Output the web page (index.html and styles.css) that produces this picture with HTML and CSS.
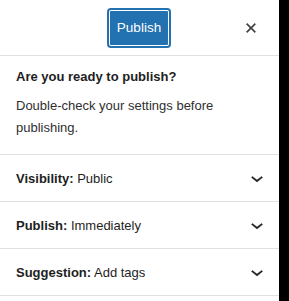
FILE: index.html
```html
<!DOCTYPE html>
<html lang="en">
<head>
  <meta charset="UTF-8">
  <title>Publish panel</title>
  <link rel="stylesheet" href="styles.css">
</head>
<body>
  <div class="panel">
    <div class="panel-header">
      <button class="publish-btn">Publish</button>
      <button class="close-btn" aria-label="Close panel">
        <svg viewBox="0 0 24 24" width="24" height="24"><path d="M12 13.06l3.712 3.713 1.061-1.06L13.061 12l3.712-3.712-1.06-1.06L12 10.938 8.288 7.227l-1.061 1.06L10.939 12l-3.712 3.712 1.06 1.061L12 13.061z"/></svg>
      </button>
    </div>

    <div class="prepublish">
      <p class="ready">Are you ready to publish?</p>
      <p class="hint">Double-check your settings before publishing.</p>
    </div>

    <div class="row">
      <span><strong>Visibility:</strong> Public</span>
      <svg viewBox="0 0 24 24" width="24" height="24"><path d="M17.5 11.6L12 16l-5.5-4.4.9-1.2L12 14l4.6-3.6 1 1.2z"/></svg>
    </div>
    <div class="row">
      <span><strong>Publish:</strong> Immediately</span>
      <svg viewBox="0 0 24 24" width="24" height="24"><path d="M17.5 11.6L12 16l-5.5-4.4.9-1.2L12 14l4.6-3.6 1 1.2z"/></svg>
    </div>
    <div class="row last">
      <span><strong>Suggestion:</strong> Add tags</span>
      <svg viewBox="0 0 24 24" width="24" height="24"><path d="M17.5 11.6L12 16l-5.5-4.4.9-1.2L12 14l4.6-3.6 1 1.2z"/></svg>
    </div>
  </div>
</body>
</html>
```

FILE: styles.css
```css
html, body { height: 100%; }
body {
  margin: 0;
  background-color: #000;
  font-family: "Liberation Sans", Arial, sans-serif;
  font-size: 13px;
  color: #1e1e1e;
}
.panel {
  width: 279px; height: 100%; background-color: #fff;
}
.panel-header {
  height: 55px; border-bottom: 1px solid #e0e0e0;
  display: flex; align-items: center; justify-content: flex-end;
  padding-right: 10px;
}
.publish-btn {
  height: 36px; width: 60px; padding: 0;
  background-color: #2271b1; color: #fff;
  border: none; border-radius: 2px;
  font-family: inherit; font-size: 13.5px;
  box-shadow: inset 0 0 0 1px #fff, 0 0 0 2px #2271b1;
  margin-right: 64px;
}
.close-btn {
  width: 36px; height: 36px; padding: 0;
  background: none; border: none;
  display: flex; align-items: center; justify-content: center;
}
.close-btn svg { fill: #3c3c3c; stroke: #3c3c3c; stroke-width: 0.3; }
.prepublish { padding: 11px 16px 15px; }
.ready {
  margin: 0; font-weight: bold; line-height: 20px;
}
.hint {
  margin: 8px 0 0; line-height: 22px; color: #2f2f2f;
}
.row {
  height: 46px; border-top: 1px solid #e0e0e0;
  display: flex; align-items: center; justify-content: space-between;
  padding: 0 10px 0 16px;
}
.row.last { border-bottom: 1px solid #e0e0e0; }
.row svg { fill: #1e1e1e; stroke: #1e1e1e; stroke-width: 0.4; }
```
